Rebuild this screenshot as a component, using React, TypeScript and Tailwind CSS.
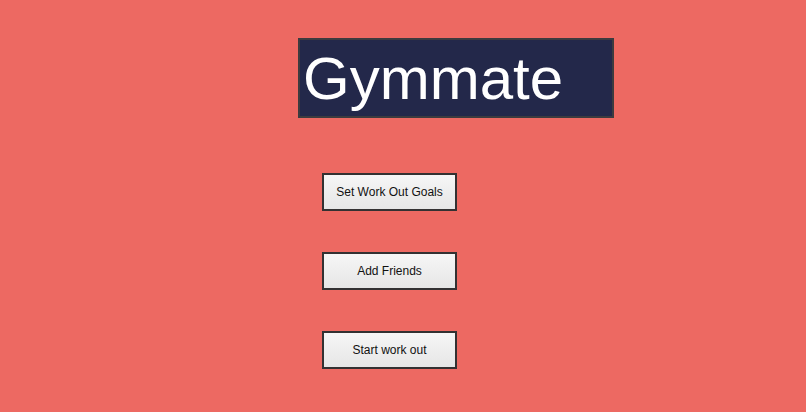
import React from "react";

const actions = ["Set Work Out Goals", "Add Friends", "Start work out"];

export default function App() {
  return (
    <div className="w-[806px] h-[412px] bg-[#ed6962] flex flex-col overflow-hidden" style={{ fontFamily: '"Liberation Sans", Arial, sans-serif' }}>
      {/* App title */}
      <div className="ml-[298px] mt-[38px] w-[316px] h-[80px] bg-[#23284a] border-2 border-[#3d3b3f] flex items-center pl-[3px]">
        <h1 className="text-white text-[60px] leading-none pt-[1px]">Gymmate</h1>
      </div>

      {/* Menu buttons */}
      <div className="ml-[322px] mt-[55px] flex flex-col gap-[41px]">
        {actions.map((label) => (
          <button
            key={label}
            className="w-[135px] h-[38px] border-2 border-[#333132] bg-gradient-to-b from-[#f6f6f6] to-[#e6e6e6] text-[12px] text-[#111] flex items-center justify-center"
          >
            {label}
          </button>
        ))}
      </div>
    </div>
  );
}
